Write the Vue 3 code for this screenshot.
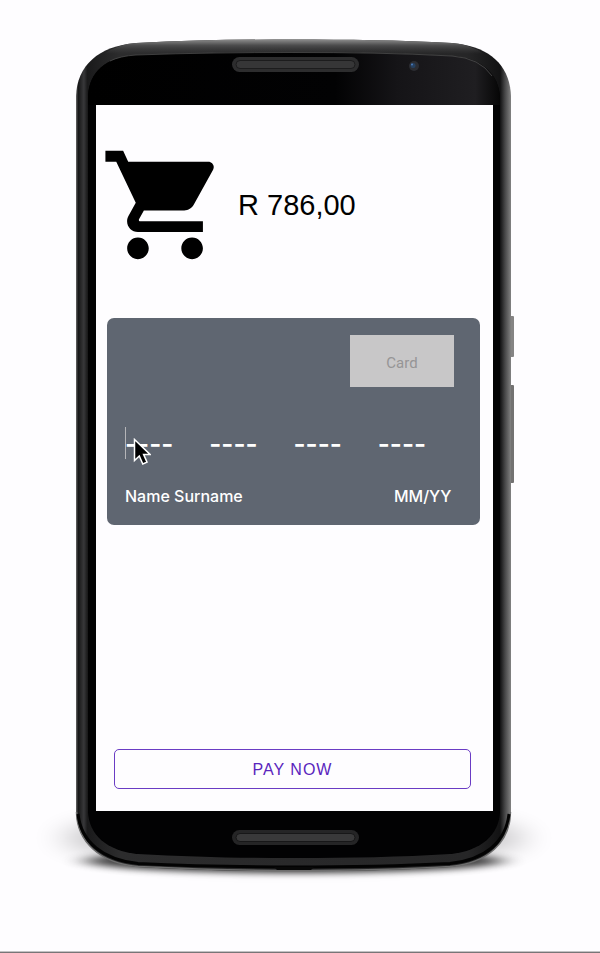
<script setup>
import { ref } from 'vue'

const price = ref('R 786,00')
const groups = ref(['', '', '', ''])
const holder = ref('')
const expiry = ref('')
</script>

<template>
  <main class="stage">
    <div class="device">
      <svg class="frame" viewBox="36 40 520 840" preserveAspectRatio="none" aria-hidden="true">
        <defs>
          <linearGradient id="rim" x1="0" x2="1" y1="0" y2="0">
            <stop offset="0" stop-color="#6a6a6a" />
            <stop offset="0.005" stop-color="#161617" />
            <stop offset="0.018" stop-color="#38383a" />
            <stop offset="0.026" stop-color="#1a1a1b" />
            <stop offset="0.1" stop-color="#2c2c2d" />
            <stop offset="0.9" stop-color="#262627" />
            <stop offset="0.975" stop-color="#121213" />
            <stop offset="0.986" stop-color="#464647" />
            <stop offset="1" stop-color="#828282" />
          </linearGradient>
          <linearGradient id="lip" x1="0" x2="0" y1="0" y2="1">
            <stop offset="0" stop-color="#8c8c8c" />
            <stop offset="0.4" stop-color="#4c4c4d" />
            <stop offset="1" stop-color="#3a3a3b" stop-opacity="0" />
          </linearGradient>
          <linearGradient id="glass" x1="0" x2="1" y1="0" y2="0">
            <stop offset="0" stop-color="#000" />
            <stop offset="0.6" stop-color="#020203" />
            <stop offset="0.75" stop-color="#151417" />
            <stop offset="0.94" stop-color="#1f1e21" />
            <stop offset="1" stop-color="#060606" />
          </linearGradient>
          <filter id="soft" x="-20%" y="-100%" width="140%" height="300%">
            <feGaussianBlur stdDeviation="16 10" />
          </filter>
          <filter id="tight" x="-20%" y="-100%" width="140%" height="300%">
            <feGaussianBlur stdDeviation="12 3" />
          </filter>
        </defs>

        <ellipse cx="294" cy="838" rx="232" ry="26" fill="#000" opacity="0.22" filter="url(#soft)" />
        <ellipse cx="294" cy="861" rx="208" ry="12" fill="#000" opacity="0.75" filter="url(#tight)" />

        <rect x="509" y="316" width="5" height="41" rx="1" fill="#858484" />
        <rect x="509" y="385" width="5" height="98" rx="1" fill="#737272" />

        <path
          d="M76 96C77 66 98 46 136 43C190 40 240 39.500 294 39.500S398 40 452 43C490 46 510 66 511 96V812C510 842 488 863 450 867C400 870 350 871 294 871S190 870 138 867C100 863 77 842 76 812Z"
          fill="url(#rim)"
        />
        <path
          d="M104 54Q118 44 136 43C190 40 240 39.500 294 39.500S398 40 452 43Q470 44 484 54L450 54H138Z"
          fill="url(#lip)"
        />
        <path
          d="M76.500 812C77 842 100 863 138 866.500C190 869 240 870.500 294 870.500S400 869.500 450 866.500C488 863 510 842 510.500 812"
          fill="none" stroke="#6e6e6e" stroke-width="1.500"
        />
        <path
          d="M78 814C81 842 103 860 138 863.500C190 866 240 867 294 867S400 866 450 863.500C485 860 506 842 509 814"
          fill="none" stroke="#030303" stroke-width="3"
        />
        <path d="M274 867h40l-3 3h-34z" fill="#080808" />
        <path
          d="M88 96C89 72 106 57 136 55C190 53 240 52.500 294 52.500S398 53 452 56C482 58 499 74 500 98V812C499 834 482 851 450 854C400 857 350 858 294 858S190 857 138 854C106 851 89 834 88 812Z"
          fill="#020203"
        />
        <path
          d="M88 105V96C89 72 106 57 136 55C190 53 240 52.500 294 52.500S398 53 452 56C482 58 499 74 500 98V105Z"
          fill="url(#glass)"
        />
        <path
          d="M110 61Q120 56 136 55C190 53 240 52.500 294 52.500S398 53 452 56Q480 58 492 76"
          fill="none" stroke="#4c4c4d" stroke-width="0.800"
        />

        <rect x="232" y="57" width="127" height="15" rx="7.500" fill="#2d2d2e" />
        <rect x="236" y="60.500" width="119" height="8" rx="4" fill="#363637" stroke="#1c1c1d" />
        <rect x="232" y="830" width="127" height="15" rx="7.500" fill="#252526" />
        <rect x="236" y="833.500" width="119" height="8" rx="4" fill="#39393a" stroke="#171718" />

        <circle cx="414" cy="66" r="5" fill="#2c2d32" />
        <circle cx="413" cy="65.500" r="2.500" fill="#26405f" />
        <circle cx="412" cy="64.500" r="1" fill="#4b7cbd" />
      </svg>

      <form class="screen" @submit.prevent>
        <header class="total">
          <svg class="cart" viewBox="0 0 24 24" aria-hidden="true">
            <path
              d="M7 18c-1.100 0-1.990.9-1.990 2S5.900 22 7 22s2-.9 2-2-.9-2-2-2zM1 2v2h2l3.600 7.590-1.350 2.450c-.16.28-.25.61-.25.96 0 1.100.9 2 2 2h12v-2H7.420c-.14 0-.25-.11-.25-.25l.03-.12.9-1.630h7.450c.75 0 1.410-.41 1.750-1.030l3.580-6.490c.08-.14.12-.31.12-.48 0-.55-.45-1-1-1H5.210l-.94-2H1zm16 16c-1.100 0-1.990.9-1.990 2s.89 2 1.990 2 2-.9 2-2-.9-2-2-2z"
            />
          </svg>
          <span class="price">{{ price }}</span>
        </header>

        <section class="card">
          <div class="brand">Card</div>
          <div class="number-row">
            <input
              v-for="(_, i) in groups" :key="i" v-model="groups[i]" class="field number"
              :aria-label="`Card number, group ${i + 1}`" inputmode="numeric" maxlength="4" placeholder="----"
            />
            <span class="caret"></span>
            <svg class="pointer" viewBox="0 0 18 28" aria-hidden="true">
              <path
                d="M1.500 1.500V22.500L6.300 18L9.800 26L14 24.200L10.600 16.400H17Z"
                fill="#000" stroke="#fff" stroke-width="1.500"
              />
            </svg>
          </div>
          <div class="details">
            <input v-model="holder" class="field holder" aria-label="Name on card" placeholder="Name Surname" />
            <input v-model="expiry" class="field expiry" aria-label="Expiry date" placeholder="MM/YY" />
          </div>
        </section>

        <button class="pay" type="submit">PAY NOW</button>
      </form>
    </div>
  </main>
</template>

<style>
body {
  margin: 0;
  background: #fefdff;
}
</style>

<style scoped>
.stage {
  box-sizing: border-box;
  min-height: 100vh;
  display: flex;
  padding: 40px 44px 72px 36px;
  border-bottom: 1px solid #777577;
  box-shadow: inset 0 -1px #c4c2c4;
  font-family: "Liberation Sans", Arial, sans-serif;
}

.device {
  position: relative;
  flex: 1;
  min-width: 0;
  display: flex;
  box-sizing: border-box;
  padding: 65px 63px 69px 60px;
}

.frame {
  position: absolute;
  inset: 0;
  width: 100%;
  height: 100%;
  overflow: visible;
}

.screen {
  position: relative;
  flex: 1;
  min-width: 0;
  display: flex;
  flex-direction: column;
  box-sizing: border-box;
  padding: 35px 13px 22px 11px;
  background: #fefdff;
}

.total {
  display: flex;
  align-items: center;
  gap: 8px;
  margin-left: -7px;
}

.cart {
  width: 130px;
  height: 130px;
  flex: none;
}

.price {
  font-size: 29px;
  line-height: 32px;
  color: #000;
}

.card {
  display: flex;
  flex-direction: column;
  box-sizing: border-box;
  margin-top: 48px;
  padding: 17px 18px;
  border-radius: 7px;
  background: #5f6671;
}

.brand {
  align-self: flex-end;
  width: 104px;
  height: 52px;
  margin-right: 8px;
  background: #c8c7c8;
  color: #969596;
  font-family: Roboto, sans-serif;
  font-size: 15px;
  line-height: 56px;
  text-align: center;
}

.number-row {
  position: relative;
  display: flex;
  margin-top: 40px;
}

.field {
  min-width: 0;
  padding: 0;
  border: 0;
  outline: 0;
  background: transparent;
  color: #fff;
}

.field::placeholder {
  color: #fff;
  opacity: 1;
}

.number {
  flex: 1;
  height: 32px;
  font: 600 26px Inter, sans-serif;
}

.caret {
  position: absolute;
  left: 0;
  top: 0;
  width: 1px;
  height: 32px;
  background: #b5b5b8;
}

.pointer {
  position: absolute;
  left: 8px;
  top: 11px;
  width: 18px;
  height: 28px;
}

.details {
  display: flex;
  justify-content: space-between;
  gap: 16px;
  margin-top: 25px;
}

.holder,
.expiry {
  height: 24px;
  font: 500 16px Inter, sans-serif;
}

.holder {
  flex: 1;
}

.expiry {
  width: 68px;
}

.pay {
  height: 40px;
  margin: auto 9px 0 7px;
  padding: 2px 0 0;
  border: 1px solid #6a3cc4;
  border-radius: 5px;
  background: transparent;
  color: #5a25bd;
  font-family: inherit;
  font-size: 16px;
  letter-spacing: 1px;
}
</style>
